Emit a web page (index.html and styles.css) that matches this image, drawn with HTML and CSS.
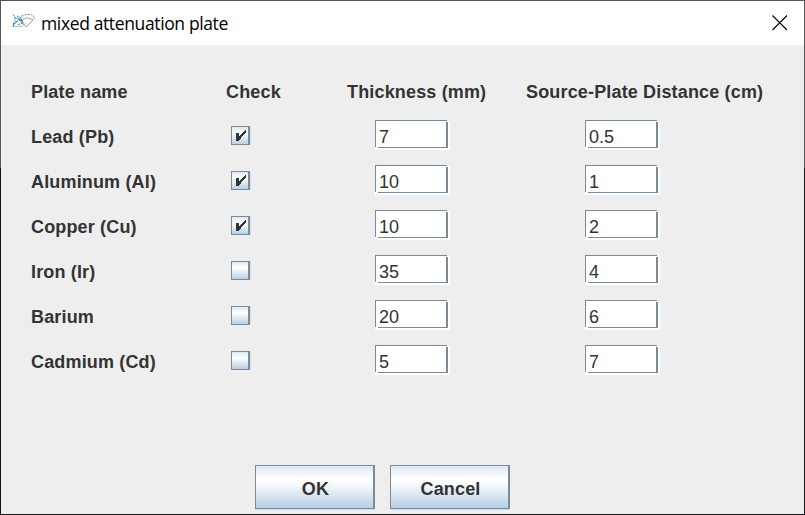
FILE: index.html
```html
<!DOCTYPE html>
<html lang="en">
<head>
<meta charset="utf-8">
<title>mixed attenuation plate</title>
<link rel="stylesheet" href="styles.css">
</head>
<body>
<div class="window">
  <header class="titlebar">
    <svg class="app-icon" width="24" height="16" viewBox="0 0 24 16" fill="none">
      <path d="M2 1.500 5 5 9 7.500 12 11M1.500 13.500 4 10 8 6 12 1.500M2 12 7 8M2.500 9.500V13M4 4.500V9M6 3l3 1.500M7 11.500l6-1.500M9 5l3 4" stroke="#2f78ac" stroke-width=".9" stroke-dasharray="2 .7"/>
      <path d="M3 5h8M2 13.500h9l4-4" stroke="#75b6dc" stroke-width=".8"/>
      <path d="M12 3.500 14 1.500h6l3 2.500v3" stroke="#7882aa" stroke-width=".9" stroke-dasharray="2 1"/>
      <path d="M12 7c3-3 5-2 8-1l2 1-7 7-4-5" stroke="#8b9991" stroke-width=".9"/>
      <path d="M8 7h3v2" stroke="#194f70"/>
    </svg>
    <h1 class="title">mixed attenuation plate</h1>
    <svg class="close" width="16" height="16" viewBox="0 0 16 16"><path d="M.5.5l14.500 14.500M15 .5L.5 15" stroke="#000" stroke-width="1.100"/></svg>
  </header>
  <main class="content">
    <div class="row"><span class="h-name">Plate name</span><span class="h-check">Check</span><span class="h-thick">Thickness (mm)</span><span class="h-dist">Source-Plate Distance (cm)</span></div>
    <div class="row"><span class="name">Lead (Pb)</span><i class="box"><svg class="tick" width="10" height="11" viewBox="0 0 10 11"><path d="M0 3h3v3h1V5h1V4h1V3h1V2h1V1h1V0h1v3H9v1H8v1H7v1H6v1H5v2H4v1H3v1H0z"/></svg></i><span class="field">7</span><span class="field">0.5</span></div>
    <div class="row"><span class="name">Aluminum (Al)</span><i class="box"><svg class="tick" width="10" height="11" viewBox="0 0 10 11"><path d="M0 3h3v3h1V5h1V4h1V3h1V2h1V1h1V0h1v3H9v1H8v1H7v1H6v1H5v2H4v1H3v1H0z"/></svg></i><span class="field">10</span><span class="field">1</span></div>
    <div class="row"><span class="name">Copper (Cu)</span><i class="box"><svg class="tick" width="10" height="11" viewBox="0 0 10 11"><path d="M0 3h3v3h1V5h1V4h1V3h1V2h1V1h1V0h1v3H9v1H8v1H7v1H6v1H5v2H4v1H3v1H0z"/></svg></i><span class="field">10</span><span class="field">2</span></div>
    <div class="row"><span class="name">Iron (Ir)</span><i class="box"></i><span class="field">35</span><span class="field">4</span></div>
    <div class="row"><span class="name">Barium</span><i class="box"></i><span class="field">20</span><span class="field">6</span></div>
    <div class="row"><span class="name">Cadmium (Cd)</span><i class="box"></i><span class="field">5</span><span class="field">7</span></div>
  </main>
  <footer class="actions"><button class="btn">OK</button><button class="btn">Cancel</button></footer>
</div>
</body>
</html>
```
FILE: styles.css
```css
*, *::before, *::after { box-sizing: border-box; }
body { margin: 0; }
.window {
  width: 805px; height: 515px; overflow: hidden;
  display: flex; flex-direction: column;
  background: #eee; color: #333;
  border: 1px solid #5a5658;
  border-image: linear-gradient(#5a5658 0 168px, #17171b 168px) 1;
  font: bold 18px/22px "Liberation Sans", Arial, sans-serif;
  letter-spacing: .16px;
}
.titlebar { height: 44px; flex: none; background: #fff; display: flex; align-items: center; padding: 0 16px 0 11px; }
.app-icon { margin: -4px 0 0 -1px; }
.title { margin: 0 auto 0 6px; font: 17.5px/24px "Open Sans", "Noto Sans", sans-serif; letter-spacing: -.37px; color: #000; }
.close { margin-top: -1px; }
.content { padding: 24px 0 0 30px; height: 414px; flex: none; }
.row {
  height: 45px;
  display: grid; grid-template-columns: 200px 144px 210px 200px; align-items: center;
}
.h-check { margin-left: -5px; }
.h-thick { margin-left: -28px; }
.h-dist { margin-left: -59px; }
.row span { white-space: nowrap; }
.box {
  position: relative; width: 19px; height: 19px; margin-top: -2px;
  border: 1px solid #7a8a99; border-right-width: 2px;
  background: linear-gradient(#dde8f3, #fff 35%, #b8cfe5);
  box-shadow: 1px 0 #d3dfeb;
}
.tick { position: absolute; left: 4px; top: 3px; fill: #333; }
.row .field {
  position: relative; width: 75px; height: 30px; margin-top: -3px;
  background: #fff; padding: 6px 0 0 4px; font-weight: normal;
  line-height: 22px; letter-spacing: 0;
  clip-path: polygon(0 0, 72px 0, 72px 1px, 100% 1px, 100% 100%, 0 100%);
}
.field::before {
  content: ""; position: absolute; left: 0; top: 0; width: 72px; height: 27px;
  border-top: 1px solid #7a8a99; border-left: 1px solid #7a8a99;
}
.field::after {
  content: ""; position: absolute; left: 3px; top: 2px; width: 70px; height: 26px;
  border-right: 2px solid #7a8a99; border-bottom: 1px solid #7a8a99;
}
.actions { display: flex; gap: 15px; padding: 6px 0 0 254px; }
.btn {
  width: 120px; height: 44px; padding: 4px 0 0 2px; flex: none;
  font: inherit; letter-spacing: inherit; color: #333;
  border: 1px solid #7a8a99; border-right-width: 2px; border-radius: 0;
  background: linear-gradient(#dde8f3, #fff 30%, #fff 36%, #b8cfe5);
  box-shadow: 0 1px #c9dae9;
}
```
